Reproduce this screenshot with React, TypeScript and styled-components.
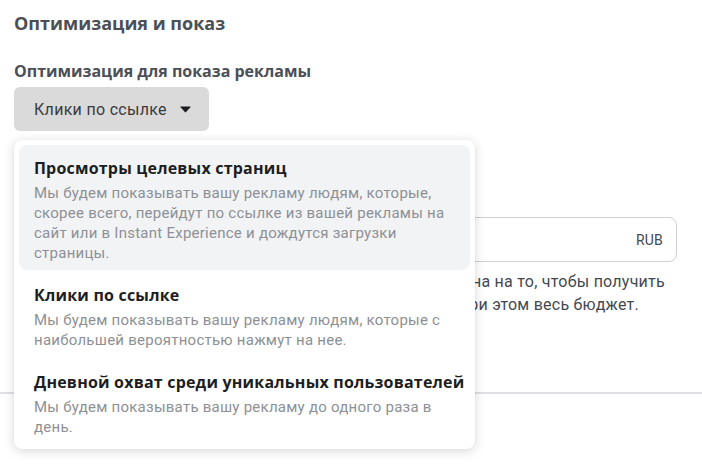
import React from "react";
import styled, { createGlobalStyle } from "styled-components";

const Global = createGlobalStyle`
  html, body { margin: 0; padding: 0; background: #fff; }
  body { font-family: Roboto, "Liberation Sans", Arial, sans-serif; -webkit-font-smoothing: antialiased; }
  * { box-sizing: border-box; }
`;

const boldFont = `"Open Sans", "Liberation Sans", Arial, sans-serif`;

const Page = styled.div`
  position: relative;
  width: 702px;
  height: 465px;
  overflow: hidden;
  padding: 12px 25px 0 14px;
`;

const SectionTitle = styled.h2`
  margin: 0;
  font-family: ${boldFont};
  font-size: 18px;
  line-height: 22px;
  font-weight: 700;
  color: #4b4f56;
`;

const FieldLabel = styled.div`
  margin-top: 27px;
  font-family: ${boldFont};
  font-size: 16px;
  line-height: 20px;
  font-weight: 700;
  color: #4b4f56;
`;

const SelectButton = styled.button`
  margin-top: 6px;
  height: 44px;
  width: 195px;
  display: flex;
  align-items: center;
  justify-content: space-between;
  padding: 0 18px 0 20px;
  border: none;
  border-radius: 6px;
  background: #dadada;
  font-family: inherit;
  font-size: 16px;
  letter-spacing: 0.3px;
  color: #3a3a3a;
  cursor: pointer;
`;

const HiddenLabel = styled.div`
  margin-top: 52px;
  font-family: ${boldFont};
  font-size: 15px;
  line-height: 20px;
  font-weight: 700;
  color: #4b4f56;
`;

const InputBox = styled.div`
  margin-top: 14px;
  height: 45px;
  border: 1px solid #ccd0d5;
  border-radius: 8px;
  display: flex;
  align-items: center;
  justify-content: flex-end;
  padding: 0 13px;
  font-size: 14px;
  letter-spacing: 0.2px;
  color: #444950;
`;

const Helper = styled.div`
  margin-top: 8px;
  font-size: 16px;
  line-height: 23px;
  letter-spacing: 0.24px;
  color: #444950;
`;

const HelperLine = styled.div`
  white-space: nowrap;
`;

const Divider = styled.div`
  margin: 76px -25px 0 -14px;
  height: 2px;
  background: #dde0e4;
`;

const Menu = styled.div`
  position: absolute;
  left: 14px;
  top: 140px;
  width: 461px;
  padding: 5px;
  background: #fff;
  border-radius: 8px;
  box-shadow: 0 2px 12px rgba(0, 0, 0, 0.16), 0 0 1px rgba(0, 0, 0, 0.08);
  display: flex;
  flex-direction: column;
  gap: 2px;
`;

const Option = styled.div<{ $active?: boolean }>`
  padding: 13px 4px 7px 15px;
  border-radius: 8px;
  background: ${(p) => (p.$active ? "#f2f3f5" : "transparent")};
  display: flex;
  flex-direction: column;
  gap: 5px;
`;

const OptionTitle = styled.div`
  font-family: ${boldFont};
  font-size: 16px;
  line-height: 20px;
  letter-spacing: 0.2px;
  font-weight: 700;
  white-space: nowrap;
  color: #1c1e21;
`;

const OptionDesc = styled.div`
  font-size: 15px;
  line-height: 20px;
  letter-spacing: 0.25px;
  color: #8d9095;
`;

const Caret = () => (
  <svg width="11" height="7" viewBox="0 0 11 7">
    <path d="M0.8 0.6 H10.2 Q10.9 0.6 10.4 1.2 L6.1 6.1 Q5.5 6.7 4.9 6.1 L0.6 1.2 Q0.1 0.6 0.8 0.6 Z" fill="#1c1e21" />
  </svg>
);

const options = [
  {
    title: "Просмотры целевых страниц",
    desc: [
      "Мы будем показывать вашу рекламу людям, которые,",
      "скорее всего, перейдут по ссылке из вашей рекламы на",
      "сайт или в Instant Experience и дождутся загрузки",
      "страницы.",
    ],
    active: true,
  },
  {
    title: "Клики по ссылке",
    desc: [
      "Мы будем показывать вашу рекламу людям, которые с",
      "наибольшей вероятностью нажмут на нее.",
    ],
  },
  {
    title: "Дневной охват среди уникальных пользователей",
    desc: ["Мы будем показывать вашу рекламу до одного раза в", "день."],
  },
];

export default function App() {
  return (
    <Page>
      <Global />
      <SectionTitle>Оптимизация и показ</SectionTitle>
      <FieldLabel>Оптимизация для показа рекламы</FieldLabel>
      <SelectButton>
        <span>Клики по ссылке</span>
        <Caret />
      </SelectButton>
      <HiddenLabel>Цель стоимости за результат</HiddenLabel>
      <InputBox>RUB</InputBox>
      <Helper>
        <HelperLine>Если вы не укажете цель стоимости, система будет нацелена на то, чтобы получить</HelperLine>
        <HelperLine>максимальное количество результатов и израсходовать при этом весь бюджет.</HelperLine>
      </Helper>
      <Divider />
      <Menu>
        {options.map((o) => (
          <Option key={o.title} $active={o.active}>
            <OptionTitle>{o.title}</OptionTitle>
            <OptionDesc>
              {o.desc.map((l, i) => (
                <div key={i}>{l}</div>
              ))}
            </OptionDesc>
          </Option>
        ))}
      </Menu>
    </Page>
  );
}
